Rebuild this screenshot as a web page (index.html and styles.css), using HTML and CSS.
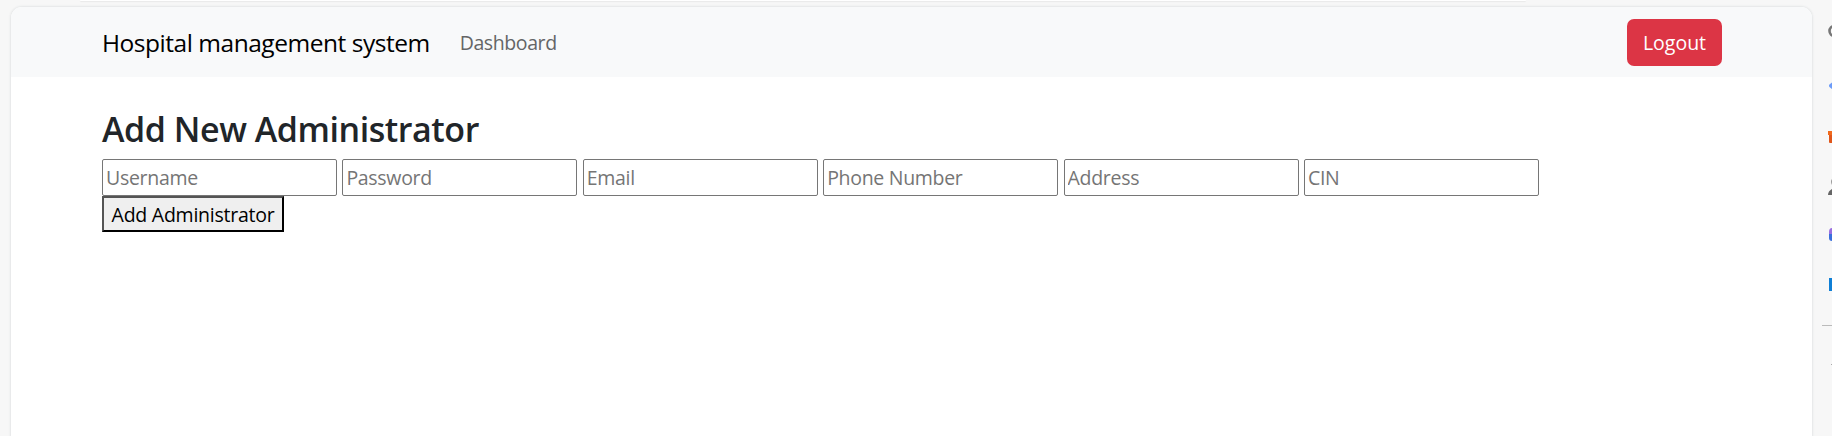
FILE: index.html
```html
<!DOCTYPE html>
<html lang="en">
<head>
<meta charset="utf-8">
<title>Hospital management system</title>
<link rel="stylesheet" href="styles.css">
</head>
<body>
<div class="toolbar"></div>
<div class="workspace">
  <div class="page">
    <nav class="navbar">
      <a class="brand">Hospital management system</a>
      <a class="nav-link">Dashboard</a>
      <button class="logout">Logout</button>
    </nav>
    <main class="content">
      <h2 class="title">Add New Administrator</h2>
      <form class="form">
        <div class="fields">
          <input class="field" placeholder="Username">
          <input class="field" placeholder="Password">
          <input class="field" placeholder="Email">
          <input class="field" placeholder="Phone Number">
          <input class="field" placeholder="Address">
          <input class="field" placeholder="CIN">
        </div>
        <button class="submit" type="button">Add Administrator</button>
      </form>
    </main>
  </div>
  <svg class="sidebar" width="18" height="429" viewBox="1814 7 18 429">
    <circle cx="1834.500" cy="31" r="5" fill="none" stroke="#777" stroke-width="2.600"/>
    <path d="M1832 82.500l-2 1.500a2 2 0 0 0 0 3.500l2 1.500z" fill="#6d9cf8"/>
    <path d="M1828 131h4v4h-4z" fill="#f06a1d"/><path d="M1829 135h3v8h-2q-1 0-1-1z" fill="#e0561a"/>
    <path d="M1832 179q-2 2 0 6z" fill="#999"/><path d="M1832 189q-4 2-4 6h4z" fill="#666"/>
    <path d="M1832 228q-3 0-3 4v3h3z" fill="#9a6fe0"/><path d="M1829 234h3v7q-3 0-3-3z" fill="#3a6fdc"/>
    <path d="M1829 278h3v13h-3z" fill="#0f7fd6"/>
    <path d="M1822 325.500h10" stroke="#bbb"/>
    <path d="M1831 364.500h1" stroke="#aaa"/>
  </svg>
</div>
</body>
</html>
```
FILE: styles.css
```css
* { box-sizing: border-box; }
body {
  margin: 0;
  height: 436px;
  overflow: hidden;
  background: #f7f7f7;
  font-family: "Open Sans", sans-serif;
  font-size: 19.5px;
  letter-spacing: -0.25px;
  color: #212529;
}
.toolbar {
  width: 1446px;
  height: 1px;
  margin: 0 0 6px 80px;
  background: #fff;
  border-radius: 0 0 8px 8px;
  box-shadow: 0 1px 1px #e8e8e8;
}
.workspace { display: flex; height: 429px; }
.page {
  width: 1801px;
  margin: 0 2px 0 11px;
  background: #fff;
  border-radius: 11px 11px 0 0;
  box-shadow: 0 0 2px 1px #e4e6e7;
}
.navbar {
  display: flex;
  align-items: center;
  height: 70px;
  padding: 0 90px 0 91px;
  background: #f8f9fa;
  border-radius: 11px 11px 0 0;
}
.brand { font-size: 24.5px; letter-spacing: -0.47px; color: #000; }
.nav-link { margin-left: 30px; padding-top: 1px; color: #646566; letter-spacing: -0.4px; }
.logout {
  width: 95px;
  height: 47px;
  margin-left: auto;
  padding: 1px 0 0;
  border: 0;
  border-radius: 7px;
  background: #dc3545;
  color: #fff;
  font: inherit;
  letter-spacing: 0;
}
.content { padding: 31px 91px 0; }
.title { margin: 0 0 9px; font-size: 34px; line-height: 42px; font-weight: 600; letter-spacing: -0.45px; }
.form { display: flex; flex-direction: column; align-items: flex-start; }
.fields { display: flex; gap: 5.4px; }
.field {
  width: 235px;
  height: 37px;
  padding: 1px 3px;
  border: 1px solid #767676;
  border-radius: 2px;
  font: inherit;
  letter-spacing: -0.3px;
}
.field::placeholder { color: #757575; }
.submit {
  width: 182px;
  height: 36px;
  padding: 1px 0 0;
  border: 2px outset #000;
  background: #efefef;
  color: #000;
  font: inherit;
  letter-spacing: -0.25px;
  white-space: nowrap;
}
```
